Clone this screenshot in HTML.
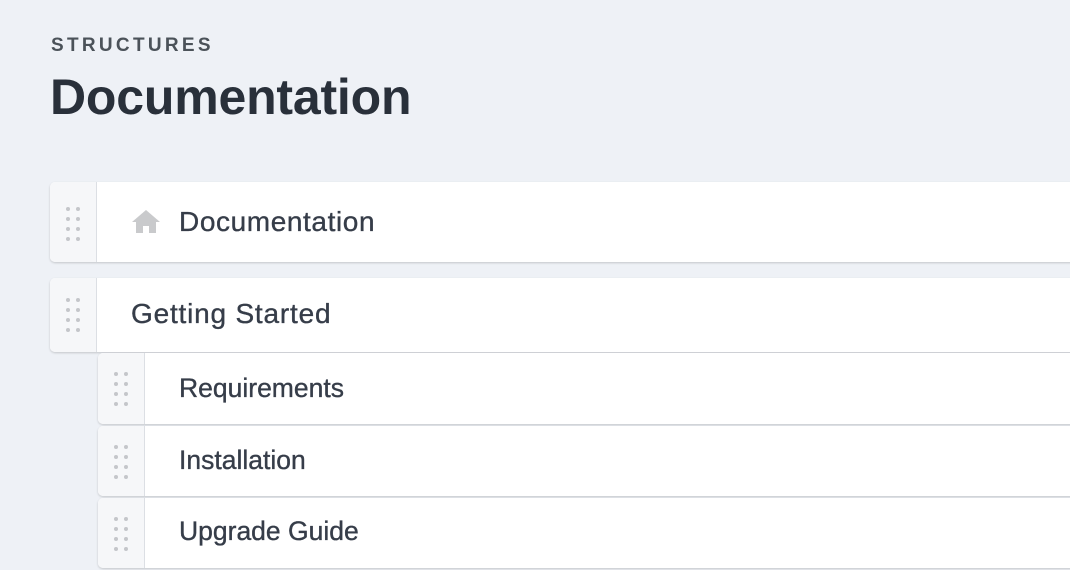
<!DOCTYPE html>
<html><head><style>
*{margin:0;padding:0;box-sizing:border-box}
body{width:1070px;height:570px;overflow:hidden;background:#eef1f6;font-family:"Liberation Sans",sans-serif;position:relative}
.lbl{position:absolute;left:51px;top:35px;font-size:19px;font-weight:bold;letter-spacing:3.3px;color:#4b5259}
.ttl{position:absolute;left:50px;top:68px;font-size:50px;font-weight:bold;color:#29303a;letter-spacing:-0.2px}
.card{position:absolute;background:#fff;border-radius:5px 0 0 5px;box-shadow:0 1px 2px rgba(0,0,0,.18);}
.h{position:absolute;left:0;top:0;bottom:0;width:47px;background:#f6f7f9;border-right:1.5px solid #dcdfe4;border-radius:5px 0 0 5px}
.d{position:absolute;left:16px;width:14px}
.d i{display:block;float:left;width:4px;height:4px;border-radius:50%;background:#c4c6ca;margin:0 6px 6px 0}
.d i:nth-child(2n){margin-right:0}
.t{position:absolute;color:#363d49;white-space:nowrap;-webkit-text-stroke:0.35px #363d49}
</style></head><body>
<div class="lbl">STRUCTURES</div>
<div class="ttl">Documentation</div>

<div class="card" style="left:50px;top:182px;width:1030px;height:80px">
 <div class="h"><div class="d" style="top:25px"><i></i><i></i><i></i><i></i><i></i><i></i><i></i><i></i></div></div>
 <svg style="position:absolute;left:81px;top:26px" width="30" height="26" viewBox="0 0 30 26"><path d="M15 2 L1 14 H5 V25 H12 V18 H18 V25 H25 V14 H29 Z" fill="#c9cacc"/></svg>
 <div class="t" style="left:129px;top:24px;font-size:28px;letter-spacing:0.6px">Documentation</div>
</div>

<div class="card" style="left:50px;top:278px;width:1030px;height:74px">
 <div class="h"><div class="d" style="top:20px"><i></i><i></i><i></i><i></i><i></i><i></i><i></i><i></i></div></div>
 <div class="t" style="left:81px;top:20px;font-size:28px;letter-spacing:0.8px">Getting Started</div>
</div>

<div class="card" style="left:98px;top:353px;width:990px;height:71px">
 <div class="h"><div class="d" style="top:19px"><i></i><i></i><i></i><i></i><i></i><i></i><i></i><i></i></div></div>
 <div class="t" style="left:81px;top:20px;font-size:26.5px">Requirements</div>
</div>
<div class="card" style="left:98px;top:426px;width:990px;height:70px">
 <div class="h"><div class="d" style="top:19px"><i></i><i></i><i></i><i></i><i></i><i></i><i></i><i></i></div></div>
 <div class="t" style="left:81px;top:19px;font-size:26.5px">Installation</div>
</div>
<div class="card" style="left:98px;top:498px;width:990px;height:70px">
 <div class="h"><div class="d" style="top:19px"><i></i><i></i><i></i><i></i><i></i><i></i><i></i><i></i></div></div>
 <div class="t" style="left:81px;top:18px;font-size:26.5px">Upgrade Guide</div>
</div>
</body></html>
